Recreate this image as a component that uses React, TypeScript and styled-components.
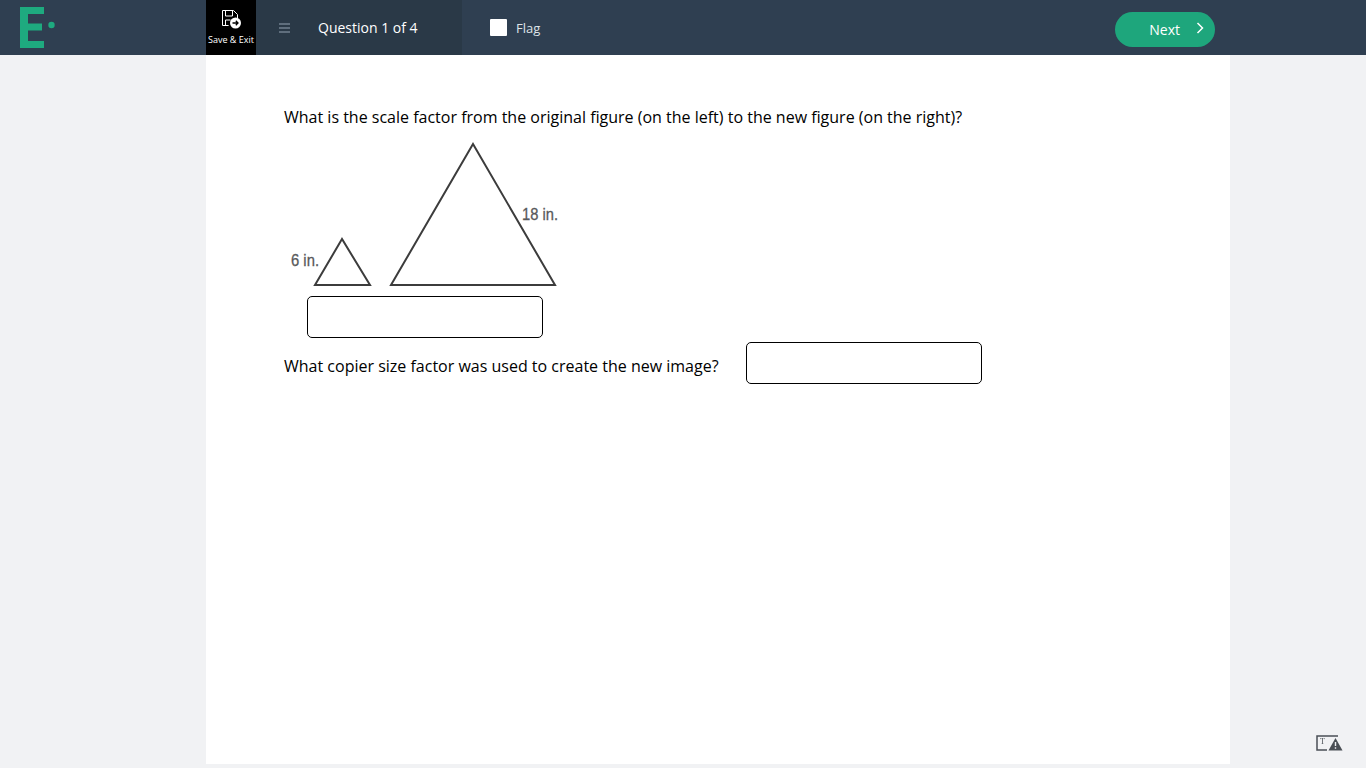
import { FC } from 'react'
import styled, { createGlobalStyle } from 'styled-components'

const GlobalStyle = createGlobalStyle`
  html, body {
    margin: 0;
    height: 100%;
    overflow: hidden;
    background: #f1f2f4;
    font-family: 'Open Sans', 'Liberation Sans', sans-serif;
  }
`

const Header = styled.header`
  display: flex;
  align-items: stretch;
  height: 55px;
  background: #2f3f51;
`

const LogoSlot = styled.div`
  display: flex;
  align-items: flex-start;
  width: 206px;
  padding: 7px 0 0 20px;
  box-sizing: border-box;
`

const SaveExit = styled.button`
  display: flex;
  flex-direction: column;
  align-items: center;
  gap: 5px;
  width: 50px;
  padding: 9px 0 0;
  border: 0;
  background: #000;
  color: #fff;
  font: 9px/12px 'Open Sans', 'Liberation Sans', sans-serif;
  white-space: nowrap;
`

const QuestionNav = styled.div`
  display: flex;
  align-items: center;
  width: 206px;
  padding-left: 23px;
  box-sizing: border-box;
  background: #2a3947;
`

const Burger = styled.span`
  display: flex;
  flex-direction: column;
  gap: 2px;
  width: 11px;
  margin-right: 28px;

  i {
    display: block;
    height: 2px;
    background: #5f6e7d;
  }
`

const QuestionCount = styled.span`
  color: #fff;
  font-size: 14px;
`

const FlagLabel = styled.label`
  display: flex;
  align-items: center;
  margin-left: 28px;
  color: #dfe4e8;
  font-size: 13px;
`

const FlagBox = styled.span`
  width: 17px;
  height: 17px;
  margin-right: 9px;
  border-radius: 1px;
  background: #fff;
`

const NextBtn = styled.button`
  display: flex;
  align-items: center;
  justify-content: flex-end;
  gap: 16px;
  width: 100px;
  height: 35px;
  margin: 12px 151px 0 auto;
  padding: 0 11px 0 0;
  border: 0;
  border-radius: 18px;
  background: #1ea67c;
  color: #fff;
  font: 14px 'Open Sans', 'Liberation Sans', sans-serif;
`

const NextChevron = styled.svg`
  width: 8px;
  height: 12px;
  margin-top: -4px;
`

const Sheet = styled.main`
  width: 1024px;
  height: 709px;
  margin-left: 206px;
  padding: 52px 0 0 78px;
  box-sizing: border-box;
  background: #fff;
  color: #000;
  font-size: 16px;
`

const Prompt = styled.p`
  margin: 0;
  line-height: 20px;
`

const RowPrompt = styled(Prompt)`
  padding-top: 14px;
`

const Figure = styled.svg`
  display: block;
  width: 280px;
  height: 166px;
  margin-top: 3px;
`

const Answer = styled.input`
  display: block;
  width: 236px;
  height: 42px;
  padding: 0 8px;
  box-sizing: border-box;
  border: 1px solid #000;
  border-radius: 5px;
  background: #fff;
`

const FirstAnswer = styled(Answer)`
  margin: 0 0 4px 23px;
`

const QuestionRow = styled.div`
  display: flex;
  align-items: flex-start;
  gap: 27px;
`

const ReportIcon = styled.svg`
  position: fixed;
  left: 1316px;
  top: 735px;
  width: 27px;
  height: 16px;
`

const Logo: FC = () => (
  <svg width='36' height='41' viewBox='0 0 36 41' aria-label='Logo'>
    <path d='M0 0h24v7H8v9.5h14v7H8V34h16v7H0z' fill='#1eaa7f' />
    <circle cx='31.5' cy='18' r='3.2' fill='#1eaa7f' />
  </svg>
)

const SaveIcon: FC = () => (
  <svg width='24' height='20' viewBox='0 0 24 20' fill='none'>
    <path d='M9.6 16.5H3.5V1.5h11l4 4V9' stroke='#fff' strokeWidth='1' />
    <path d='M6.5 1.5v5.5h7V1.5M6.5 16V11h5' stroke='#fff' strokeWidth='1' />
    <circle cx='16.5' cy='14' r='5.5' fill='#fff' />
    <path
      d='M13.5 14h5.5M16.8 11.8 19 14l-2.2 2.2'
      stroke='#000'
      strokeWidth='1.3'
    />
  </svg>
)

const Triangles: FC = () => (
  <Figure viewBox='0 0 280 166'>
    <g fill='none' stroke='#3c3c3c' strokeWidth='2'>
      <path d='M58 109 31 155h55z' />
      <path d='M189 14 107 155h164z' />
    </g>
    <g
      fill='#58595b'
      stroke='#58595b'
      strokeWidth='0.3'
      fontFamily="'Liberation Sans', sans-serif"
      fontSize='17'
    >
      <text x='7' y='136' textLength='28' lengthAdjust='spacingAndGlyphs'>6 in.</text>
      <text x='238' y='90' textLength='36' lengthAdjust='spacingAndGlyphs'>18 in.</text>
    </g>
  </Figure>
)

const App: FC = () => (
  <>
    <GlobalStyle />
    <Header>
      <LogoSlot>
        <Logo />
      </LogoSlot>
      <SaveExit>
        <SaveIcon />
        Save &amp; Exit
      </SaveExit>
      <QuestionNav>
        <Burger>
          <i />
          <i />
          <i />
        </Burger>
        <QuestionCount>Question 1 of 4</QuestionCount>
      </QuestionNav>
      <FlagLabel>
        <FlagBox />
        Flag
      </FlagLabel>
      <NextBtn>
        Next
        <NextChevron viewBox='0 0 8 12' fill='none'>
          <path d='M1.5 1 6.5 6l-5 5' stroke='#fff' strokeWidth='1.5' />
        </NextChevron>
      </NextBtn>
    </Header>
    <Sheet>
      <Prompt>
        What is the scale factor from the original figure (on the left) to the new figure (on the right)?
      </Prompt>
      <Triangles />
      <FirstAnswer aria-label='Scale factor' />
      <QuestionRow>
        <RowPrompt>What copier size factor was used to create the new image?</RowPrompt>
        <Answer aria-label='Copier size factor' />
      </QuestionRow>
    </Sheet>
    <ReportIcon viewBox='0 0 27 16' fill='none'>
      <path d='M22 1H1v14h10' stroke='#4a4f55' strokeWidth='1.5' />
      <text x='4' y='9' fontFamily="'Liberation Serif', serif" fontSize='8' fill='#4a4f55'>T</text>
      <path d='M19.5 3 26.5 15.5H12.5z' fill='#4a4f55' />
      <path d='M19.5 7v4M19.5 12.2v1.6' stroke='#f1f2f4' strokeWidth='1.4' />
    </ReportIcon>
  </>
)

export default App
